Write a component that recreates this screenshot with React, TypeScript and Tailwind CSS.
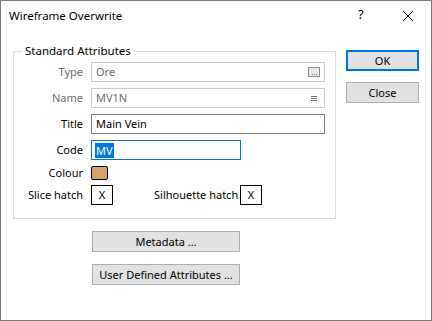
import React from 'react';

const font = { fontFamily: '"Noto Sans", "Segoe UI", Arial, sans-serif' };

function Field({ label, disabled, children }: { label: string; disabled?: boolean; children: React.ReactNode }) {
  return (
    <div className="flex items-center h-[20px]">
      <div className={`w-[70px] text-right pr-[1px] ${disabled ? 'text-[#6d6d6d]' : 'text-black'}`}>{label}</div>
      <div className="ml-[7px] flex items-center h-full">{children}</div>
    </div>
  );
}

function Button({ label, primary, className = '' }: { label: string; primary?: boolean; className?: string }) {
  return (
    <button
      className={`h-[21px] bg-[#e1e1e1] text-black text-[11px] leading-none flex items-center justify-center ${
        primary ? 'border-2 border-[#0078d7]' : 'border border-[#adadad]'
      } ${className}`}
    >
      {label}
    </button>
  );
}

export default function App() {
  return (
    <div className="w-[432px] h-[321px] bg-white border border-[#7a7a7a] flex flex-col text-[11px] text-black" style={font}>
      {/* title bar */}
      <div className="h-[30px] flex items-center pl-[8px] shrink-0">
        <span className="flex-1 text-[11.5px]">Wireframe Overwrite</span>
        <span className="w-[10px] text-[13px] mr-[34px] mt-[-2px]">?</span>
        <svg width="12" height="12" viewBox="0 0 12 12" className="mr-[17px]">
          <path d="M1 1 L11 11 M11 1 L1 11" stroke="#000" strokeWidth="1" />
        </svg>
      </div>

      <div className="flex pl-[12px]">
        <div className="flex flex-col">
          <fieldset className="w-[323px] h-[176px] mt-[12px] border border-[#dcdcdc] px-0 pt-[3px]">
            <legend className="ml-[8px] px-[3px] leading-[16px] text-[11.5px]">Standard Attributes</legend>
            <div className="flex flex-col gap-[6px]">
              <Field label="Type" disabled>
                <div className="w-[234px] h-[20px] border border-[#cccccc] flex items-center justify-between pl-[4px] pr-[4px] text-[#6d6d6d]">
                  <span>Ore</span>
                  <div className="w-[12px] h-[10px] border border-[#8a8a8a] bg-[#e8e8e8] flex items-end justify-center gap-[1px] pb-[1px]">
                    <span className="w-[1px] h-[1px] bg-[#808080]" />
                    <span className="w-[1px] h-[1px] bg-[#808080]" />
                    <span className="w-[1px] h-[1px] bg-[#808080]" />
                  </div>
                </div>
              </Field>
              <Field label="Name" disabled>
                <div className="w-[234px] h-[20px] border border-[#cccccc] flex items-center justify-between pl-[4px] pr-[7px] text-[#6d6d6d]">
                  <span>MV1N</span>
                  <div className="flex flex-col gap-[1px] w-[6px]">
                    <span className="h-[1px] bg-[#707070]" />
                    <span className="h-[1px] bg-[#707070]" />
                    <span className="h-[1px] bg-[#707070]" />
                  </div>
                </div>
              </Field>
              <Field label="Title">
                <div className="w-[234px] h-[20px] border border-[#7a7a7a] flex items-center pl-[4px]">Main Vein</div>
              </Field>
              <Field label="Code">
                <div className="w-[150px] h-[20px] border border-[#0078d7] flex items-center pl-[3px]">
                  <span className="bg-[#0078d7] text-white leading-[15px] px-[1px]">MV</span>
                </div>
              </Field>
            </div>
            <div className="flex items-center h-[14px] mt-[6px]">
              <div className="w-[70px] text-right pr-[1px]">Colour</div>
              <div className="ml-[7px] w-[17px] h-[14px] rounded-[2px] border border-black bg-[#d6a26c]" />
            </div>
            <div className="flex items-center h-[20px] mt-[5px]">
              <div className="w-[70px] text-right pr-[1px]">Slice hatch</div>
              <div className="ml-[7px] w-[22px] h-[20px] border border-black flex items-center justify-center">X</div>
              <div className="ml-[41px] w-[86px] shrink-0 whitespace-nowrap">Silhouette hatch</div>
              <div className="w-[22px] h-[20px] border border-black flex items-center justify-center">X</div>
            </div>
          </fieldset>
          <div className="flex flex-col gap-[12px] pl-[79px] mt-[12px]">
            <Button label="Metadata ..." className="w-[148px]" />
            <Button label="User Defined Attributes ..." className="w-[148px]" />
          </div>
        </div>

        <div className="flex flex-col gap-[11px] ml-[10px] pt-[19px]">
          <Button label="OK" primary className="w-[73px]" />
          <Button label="Close" className="w-[73px]" />
        </div>
      </div>
    </div>
  );
}
